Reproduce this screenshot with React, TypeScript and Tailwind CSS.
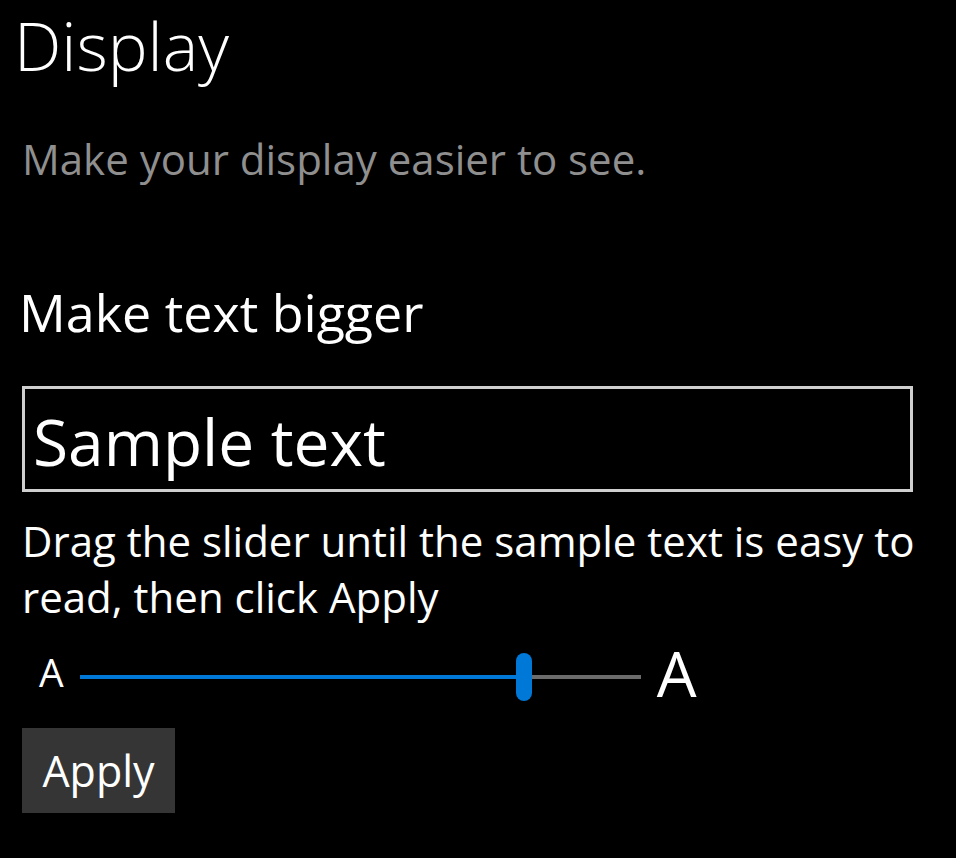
import React from "react";

const font = { fontFamily: '"Open Sans", "Noto Sans", sans-serif' };

const TextSizeSlider = () => {
  return (
    <div className="flex items-center h-[48px] mt-[28px]">
      <span className="ml-[17px] text-[39px] leading-[39px] mb-[12px] text-white">A</span>
      <div className="relative ml-[16px] w-[561px] h-[48px] flex items-center">
        <div className="w-[444px] h-[4px] bg-[#0078d7]" />
        <div className="flex-1 h-[4px] bg-[#6b6b6b]" />
        <div className="absolute left-[436px] top-0 w-[16px] h-[48px] rounded-full bg-[#0078d7]" />
      </div>
      <span className="ml-[16px] text-[63px] leading-[63px] mb-[10px] text-white">A</span>
    </div>
  );
};

const App = () => {
  return (
    <div className="w-[956px] h-[858px] bg-black text-white overflow-hidden" style={font}>
      <div className="flex flex-col items-start pl-[22px]">
        <h1 className="ml-[-8px] text-[67px] leading-[90px] font-light">Display</h1>
        <p className="mt-[44px] text-[42px] leading-[50px] text-[#8f8f8f]">
          Make your display easier to see.
        </p>
        <h2 className="mt-[95px] ml-[-3px] text-[52px] leading-[66px]">Make text bigger</h2>
        <div className="mt-[41px] w-[891px] h-[106px] border-[3px] border-[#cfcfcf] flex items-start pl-[8px] pt-[21px]">
          <span className="text-[64px] leading-[64px]">Sample text</span>
        </div>
        <p className="mt-[21px] text-[42px] leading-[56px] whitespace-nowrap">
          Drag the slider until the sample text is easy to
          <br />
          read, then click Apply
        </p>
        <TextSizeSlider />
        <button className="mt-[27px] w-[153px] h-[85px] bg-[#353535] flex items-center justify-center text-[43px] leading-[85px] text-white">
          Apply
        </button>
      </div>
    </div>
  );
};

export default App;
